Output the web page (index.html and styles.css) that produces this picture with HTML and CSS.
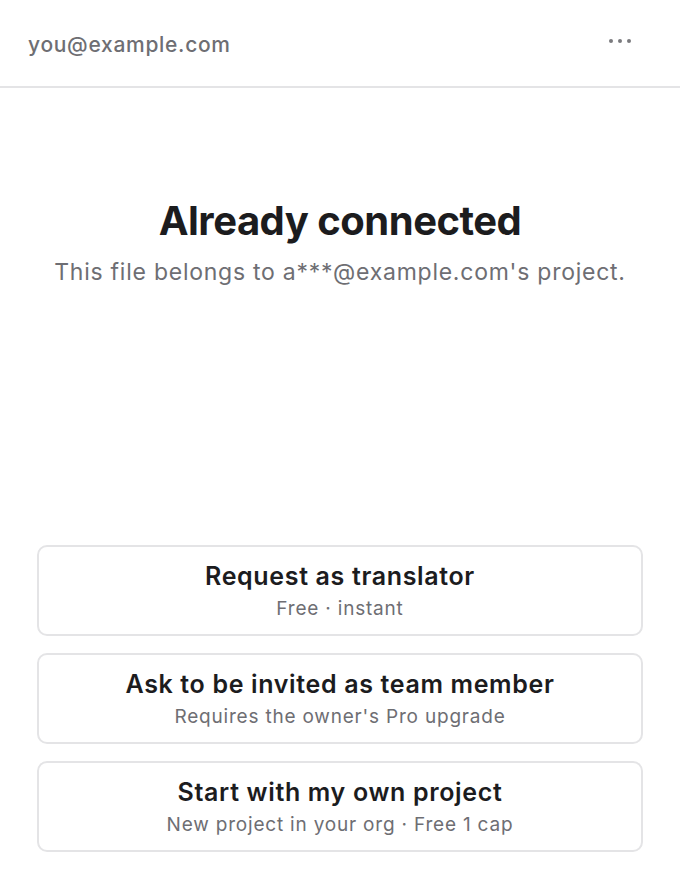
FILE: index.html
```html
<!DOCTYPE html>
<html lang="en">
<head>
    <meta charset="UTF-8">
    <meta name="viewport" content="width=device-width, initial-scale=1.0">
    <title>Already connected</title>
    <link rel="stylesheet" href="styles.css">
</head>
<body>

    <div class="topbar">
        <span class="account">you@example.com</span>
        <button class="more" aria-label="More">
            <svg width="24" height="6" viewBox="0 0 24 6">
                <circle cx="3" cy="3" r="2" fill="#7a7a7e"/>
                <circle cx="12" cy="3" r="2" fill="#7a7a7e"/>
                <circle cx="21" cy="3" r="2" fill="#7a7a7e"/>
            </svg>
        </button>
    </div>

    <div class="content">
        <div class="intro">
            <h1>Already connected</h1>
            <p>This file belongs to a***@example.com's project.</p>
        </div>

        <div class="options">
            <button class="option">
                <span class="option-title">Request as translator</span>
                <span class="option-note">Free · instant</span>
            </button>
            <button class="option">
                <span class="option-title">Ask to be invited as team member</span>
                <span class="option-note">Requires the owner's Pro upgrade</span>
            </button>
            <button class="option">
                <span class="option-title">Start with my own project</span>
                <span class="option-note">New project in your org · Free 1 cap</span>
            </button>
        </div>
    </div>

</body>
</html>
```

FILE: styles.css
```css
body {
    margin: 0;
    background: #ffffff;
    font-family: Inter, "Noto Sans", sans-serif;
    color: #1c1c1e;
    height: 880px;
    display: flex;
    flex-direction: column;
}

.topbar {
    display: flex;
    justify-content: space-between;
    align-items: center;
    height: 88px;
    padding: 0 48px 0 28px;
    border-bottom: 2px solid #e4e4e6;
    box-sizing: border-box;
    flex-shrink: 0;
}

.account {
    font-size: 21px;
    font-weight: 500;
    letter-spacing: 0.7px;
    color: #6e6e73;
    margin-top: 2px;
}

.more {
    background: none;
    border: 0;
    padding: 0;
    margin-bottom: 4px;
    cursor: pointer;
    display: flex;
}

.content {
    flex: 1;
    display: flex;
    flex-direction: column;
    justify-content: space-between;
    padding: 108px 37px 28px;
}

.intro {
    text-align: center;
}

h1 {
    font-size: 40px;
    font-weight: 700;
    letter-spacing: -0.5px;
    margin: 0 0 13px;
    color: #1c1c1e;
}

.intro p {
    margin: 0;
    font-size: 23px;
    letter-spacing: 0.75px;
    color: #6e6e73;
}

.options {
    display: flex;
    flex-direction: column;
    gap: 17px;
}

.option {
    display: flex;
    flex-direction: column;
    align-items: center;
    justify-content: center;
    gap: 6px;
    height: 91px;
    background: #ffffff;
    border: 2px solid #e4e4e6;
    border-radius: 10px;
    font-family: inherit;
    cursor: pointer;
}

.option-title {
    font-size: 25px;
    font-weight: 600;
    letter-spacing: 0.65px;
    color: #1c1c1e;
}

.option-note {
    font-size: 19px;
    letter-spacing: 0.8px;
    color: #6e6e73;
}
```
